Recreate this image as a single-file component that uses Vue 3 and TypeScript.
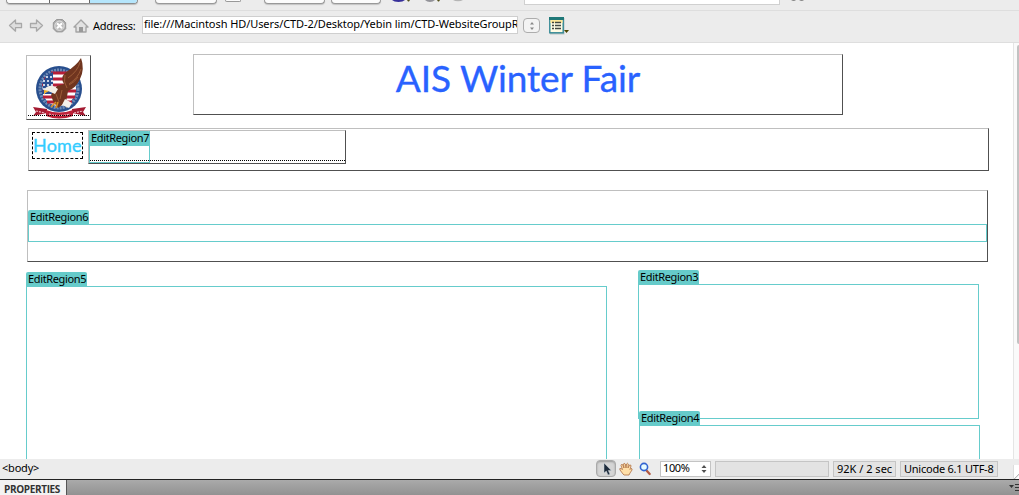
<script setup lang="ts">
import { ref } from 'vue'

const address = ref('file:///Macintosh HD/Users/CTD-2/Desktop/Yebin lim/CTD-WebsiteGroupR')
const pageTitle = 'AIS Winter Fair'
const zoomLevel = '100%'
const stats: string[] = ['92K / 2 sec', 'Unicode 6.1 UTF-8']
</script>

<template>
  <div class="app">
    <div class="toolbar">
      <div class="segments"><i class="seg first"></i><i class="seg"></i><i class="seg active"></i></div>
      <i class="btn multi"></i>
      <i class="btn tiny"></i>
      <i class="btn check"></i>
      <i class="btn files"></i>
      <svg class="strip-icons" width="80" height="5" viewBox="388 0 80 5">
        <path d="M392 0h13q-2 2-6.500 2T392 0" fill="#37309a" />
        <path d="M407 0h3l-1 1.500h-1zM437 0h3l-1 1.500h-1z" fill="#55511b" />
        <path d="M425 0h10q-2 2-5 2t-5-2" fill="#929298" />
        <path d="M453 0h10q-2 1.200-5 1.200T453 0" fill="#b5b5b5" />
      </svg>
      <i class="title-input"></i>
      <svg class="sort" width="16" height="3" viewBox="0 0 16 3">
        <path d="M0 0h5q-2 2-5 0M8 0h5q-2 2-5 0" fill="#888" />
      </svg>
    </div>

    <div class="address-bar">
      <svg class="nav" width="84" height="20" viewBox="6 16 84 20">
        <g fill="#dedede" stroke="#a8a8a8" stroke-width="1.300" stroke-linejoin="round">
          <path d="M9.500 25.500l6-5.500v3.500h6v4.200h-6v3.500z" />
          <path d="M42.500 25.500l-6-5.500v3.500h-6v4.200h6v3.500z" />
        </g>
        <path d="M56.500 19.500h6l3.200 3.200v6l-3.200 3.200h-6l-3.200-3.200v-6z" fill="#aaa" stroke="#999" />
        <circle cx="59.500" cy="25.700" r="4.700" fill="#bbb" stroke="#eee" stroke-width=".8" />
        <path d="M57 23.200l5 5m0-5l-5 5" stroke="#fff" stroke-width="2" />
        <path d="M74 27l7-7 7 7h-2v5H76v-5z" fill="#e2e2e2" stroke="#a5a5a5" stroke-width="1.400" stroke-linejoin="round" />
        <path d="M79 32v-5h4v5z" fill="#999" />
      </svg>
      <span class="address-label">Address:</span>
      <div class="address-field"><span>{{ address }}</span></div>
      <div class="stepper">
        <svg width="16" height="14" viewBox="0 0 16 14"><path d="M8 3l2 2.500H6zM8 11l2-2.500H6z" fill="#888" /></svg>
      </div>
      <svg class="list-icon" width="22" height="18" viewBox="0 0 22 18">
        <rect x="1" y="1" width="14.500" height="16.500" fill="#b9c4c4" />
        <rect x=".8" y=".8" width="13.400" height="15" fill="#fffbe4" stroke="#318794" stroke-width="1.400" />
        <path d="M0 0h15v3H0z" fill="#1f7878" />
        <path d="M1.500 3h12v3h-12z" fill="#ffe79a" />
        <path d="M3 5.500h2M3 8.500h2M3 11.500h2M6 5.500h6M6 8.500h6M6 11.500h6" stroke="#424743" stroke-width="1.300" />
        <path d="M15 13h5l-2.500 3z" fill="#4b4600" />
      </svg>
    </div>

    <main class="canvas">
      <div class="page">
        <div class="header">
          <div class="box logo">
            <svg width="63" height="63" viewBox="0 0 63 63">
              <circle cx="32" cy="33" r="23" fill="#284f8e" />
              <circle cx="32" cy="33" r="19" fill="none" stroke="#dce5ef" stroke-width="3" stroke-dasharray="2 1" opacity=".4" />
              <circle cx="32" cy="33" r="17" fill="#fff" />
              <path d="M24 17h17M17 23h30M15 29h33M15 35h34M16 41h32M20 46h25" stroke="#b71e38" stroke-width="3" />
              <path d="M16 26q3-8 10-10v22H15z" fill="#294d90" />
              <path d="M19 21h7M16 25h10M16 29h10M16 33h10" stroke="#fff" stroke-width="1.500" stroke-dasharray="2 2" />
              <path d="M54 2q4 11-1 21-4 9-12 12l-2 11-8 6-5-7-2-6 3-5 3-4 7-2q-4-6 1-11Q50 9 54 2z" fill="#70351f" />
              <path d="M53 6q-2 9-12 16M54 13q-3 9-12 15M51 21q-3 5-9 8M38 19q-2 7 2 13M29 38l3 8M35 34l-2 9" stroke="#a0603a" stroke-width=".9" fill="none" />
              <path d="M17 34q3-5 9-4l5 3-3 5-7-3-4 3z" fill="#f3eee4" />
              <path d="M17 34l5 1-4 2-1 2z" fill="#edad29" />
              <path d="M29 46l-5 5m7-5l-2 6m8-6l3 5" stroke="#d88e25" stroke-width="1.700" />
              <path d="M38 43l7 4-3 5-7-3z" fill="#f4f0ea" />
              <path d="M6 51l14 2v4l-14 3 3-4zM59 51l-14 2v4l14 3-3-4z" fill="#a41a31" />
              <path d="M19 54q13 5 27 0v6q-14 5-27 0z" fill="#be2038" />
              <path d="M22 58q10 3 21 0M9 55l9 2M47 57l9-2" stroke="#eeb7be" stroke-width="1.200" stroke-dasharray="2 1" fill="none" />
            </svg>
          </div>
          <div class="box banner"><h1>{{ pageTitle }}</h1></div>
        </div>

        <div class="box menu">
          <a class="home">Home</a>
          <div class="box menu-region">
            <div class="small-region"><span class="tab">EditRegion7</span></div>
          </div>
        </div>

        <div class="box feature">
          <div class="region wide"><span class="tab">EditRegion6</span></div>
        </div>

        <div class="columns">
          <div class="region primary"><span class="tab">EditRegion5</span></div>
          <div class="side">
            <div class="region upper"><span class="tab">EditRegion3</span></div>
            <div class="region lower"><span class="tab">EditRegion4</span></div>
          </div>
        </div>
      </div>
      <div class="scrollbar"><i></i></div>
    </main>

    <footer class="status">
      <span class="tag">&lt;body&gt;</span>
      <div class="tool">
        <svg width="18" height="14" viewBox="0 0 18 14"><path d="M7 1v10l2.300-2 1.700 4 2-.8-1.700-3.700h3z" fill="#1e2b3b" stroke="#cbd5dd" stroke-width=".5" /></svg>
      </div>
      <svg class="hand" width="14" height="14" viewBox="0 0 14 14">
        <path d="M4 12L1 8q-1-2 1-1.500l1.500 1L2 3.500q0-1.500 1.500-1L5 6 4.500 2Q5 .5 6.300 2L7 6l.5-4Q8.500.500 9.300 2L9 6l1.500-3q1.500-.5 1.500 1l-1 3.500 1-1q1.500 0 1 1.500L11 11l-1 2H5z" fill="#ffdfa8" stroke="#ad6e42" stroke-width=".8" />
      </svg>
      <svg class="magnifier" width="13" height="14" viewBox="0 0 13 14">
        <path d="M7.500 8.500l3.200 3.500" stroke="#b35a43" stroke-width="2.300" stroke-linecap="round" />
        <circle cx="5" cy="5" r="3.600" fill="#e5fbff" stroke="#3264d1" stroke-width="1.600" />
      </svg>
      <div class="zoom"><span>{{ zoomLevel }}</span>
        <svg width="6" height="10" viewBox="0 0 6 10"><path d="M3 1l2.500 3h-5zM3 9l2.500-3h-5z" fill="#505050" /></svg>
      </div>
      <div class="cell blank"></div>
      <div v-for="item in stats" :key="item" class="cell">{{ item }}</div>
      <i class="corner"></i>
    </footer>

    <div class="panel">
      <span class="panel-tab">PROPERTIES</span>
      <svg width="12" height="12" viewBox="0 0 12 12"><path d="M2 3h5L4.500 6z" fill="#333" /><path d="M8 2.500h4M8 5.500h4M8 8.500h4" stroke="#333" /></svg>
    </div>
  </div>
</template>

<style>
body { margin: 0; overflow: hidden; }
</style>

<style scoped>
* { box-sizing: border-box; }
.app { width: 1019px; height: 495px; overflow: hidden; display: flex; flex-direction: column; background: #fff; color: #000; font: 11px/14px "Noto Sans", "Open Sans", sans-serif; }
svg { display: block; flex: none; }

.toolbar { height: 11px; flex: none; background: #ececec; border-bottom: 1px solid #dedede; display: flex; align-items: flex-start; padding-left: 6px; }
.segments { width: 132px; height: 4px; display: flex; border: solid #8d8d8d; border-width: 0 1px 1px; border-radius: 0 0 4px 4px; overflow: hidden; box-shadow: 0 1px 1px #bbb; }
.seg { width: 40px; background: #fcfcfc; border-right: 1px solid #666; }
.seg.first { width: 43px; }
.seg.active { flex: 1; background: #b5e5fb; border: 0; }
.btn { height: 4px; background: #fcfcfc; border: solid #999; border-width: 0 1px 1px; border-radius: 0 0 4px 4px; box-shadow: 0 1px 1px #c4c4c4; }
.multi { width: 62px; margin-left: 17px; }
.tiny { width: 16px; height: 2px; margin-left: 8px; box-shadow: none; }
.check { width: 61px; margin-left: 23px; }
.files { width: 50px; margin-left: 6px; }
.strip-icons { margin-left: 7px; }
.title-input { width: 256px; height: 5px; margin-left: 56px; background: #fff; border: solid #d0d0d0; border-width: 0 1px 1px; }
.sort { margin-left: 11px; }

.address-bar { height: 32px; flex: none; background: #ececec; border-bottom: 1px solid #dedede; display: flex; align-items: flex-start; padding-left: 6px; }
.nav { margin-top: 5px; }
.address-label { width: 52px; margin: 8px 0 0 3px; white-space: nowrap; letter-spacing: -.28px; }
.address-field { width: 376px; height: 18px; margin: 5px 0 0 -3px; background: #fff; border: 1px solid #cfcfcf; overflow: hidden; white-space: nowrap; padding: 0 1px; line-height: 13px; }
.address-field span { letter-spacing: -.075px; }
.stepper { width: 17px; height: 15px; margin: 7px 0 0 5px; border: 1px solid #adadad; border-radius: 4px; background: #f3f3f3; display: flex; justify-content: center; }
.list-icon { margin: 6px 0 0 9px; }

.canvas { height: 416px; flex: none; display: flex; overflow: hidden; }
.page { width: 1013px; padding: 11px 0 0 26px; }
.scrollbar { width: 6px; background: #fafafa; border-left: 1px solid #e5e5e5; display: flex; justify-content: flex-end; }
.scrollbar i { width: 2px; height: 299px; margin-top: 2px; background: #c2c2c2; border-radius: 2px 0 0 2px; }
.box { border: 1px solid; border-color: #bfbfbf #505050 #505050 #bfbfbf; }
.header { display: flex; height: 74px; }
.logo { width: 65px; height: 65px; margin-top: 1px; position: relative; }
.logo::after, .menu-region::after { content: ""; position: absolute; left: 1px; right: 0; height: 1px; background: repeating-linear-gradient(90deg, #000 0 1px, transparent 1px 2px); }
.logo::after { bottom: 3px; }
.banner { width: 650px; height: 61px; margin-left: 102px; }
h1 { margin: 0; text-align: center; font: 400 37px/46px Lato, sans-serif; color: #2962ff; letter-spacing: -.1px; -webkit-text-stroke: .35px #2962ff; }
.menu { width: 961px; height: 43px; margin-left: 2px; display: flex; padding: 1px 0 0 3px; }
.home { width: 51px; height: 27px; margin-top: 2px; border: 1px dashed #000; color: #3cf; font: 18px/24px Lato, sans-serif; letter-spacing: .2px; white-space: nowrap; -webkit-text-stroke: .35px #3cf; }
.menu-region { width: 258px; height: 34px; margin-left: 5px; position: relative; }
.menu-region::after { bottom: 2px; }
.small-region { width: 61px; height: 32px; border: solid #6cc; border-width: 0 1px 1px; }
.small-region .tab { display: block; width: 61px; margin-left: -1px; }
.tab { height: 15px; width: 61px; padding: 0 0 0 2px; background: #66cbca; border-radius: 2px 2px 0 0; font-size: 11px; line-height: 13px; letter-spacing: -.36px; white-space: nowrap; }
.region { border: 1px solid #6cc; position: relative; }
.region > .tab { position: absolute; left: -1px; top: -15px; }
.feature { width: 961px; height: 72px; margin: 19px 0 0 1px; padding-top: 33px; }
.wide { width: 959px; height: 18px; }
.columns { display: flex; padding-top: 24px; }
.primary { width: 581px; height: 220px; }
.side { margin: -2px 0 0 31px; }
.upper { width: 341px; height: 135px; }
.lower { width: 341px; height: 80px; margin: 6px 0 0 1px; }

.status { height: 20px; flex: none; background: #ececec; display: flex; align-items: flex-start; padding: 1px 0 0 2px; }
.tag { width: 594px; line-height: 15px; letter-spacing: -.2px; }
.tool { width: 20px; height: 17px; border: 1px solid #aaa; border-radius: 4px; background: #d5d5d5; box-shadow: inset 0 1px 2px #999; display: flex; align-items: center; }
.hand { margin: 2px 0 0 3px; }
.magnifier { margin: 2px 0 0 6px; }
.zoom { width: 51px; height: 16px; margin: 1px 0 0 8px; border: 1px solid #c4c4c4; background: #fff; display: flex; justify-content: space-between; align-items: center; padding: 0 3px 0 2px; line-height: 14px; letter-spacing: -.4px; }
.zoom span { margin-top: -2px; }
.cell { height: 16px; margin: 1px 0 0 4px; border: 1px solid #c5c5c5; background: #e3e3e3; line-height: 13px; white-space: nowrap; padding-left: 3px; width: 98px; letter-spacing: -.24px; }
.cell.blank { width: 114px; }
.cell.blank + .cell { width: 63px; letter-spacing: 0; }
.corner { width: 6px; height: 14px; margin: 5px 0 0 auto; background: linear-gradient(135deg, #fff 70%, #aaa 72%, #fff 82%); border-left: 1px solid #ddd; }

.panel { height: 16px; flex: none; border-top: 1px solid #222; background: linear-gradient(#aaa, #929292); display: flex; justify-content: space-between; }
.panel-tab { width: 67px; background: #f3f3f3; border-right: 1px solid #555; padding-left: 4px; font-family: "Open Sans", sans-serif; font-size: 10px; font-weight: 700; line-height: 18px; color: #333; letter-spacing: -.35px; white-space: nowrap; }
.panel svg { margin-top: 2px; }
</style>
